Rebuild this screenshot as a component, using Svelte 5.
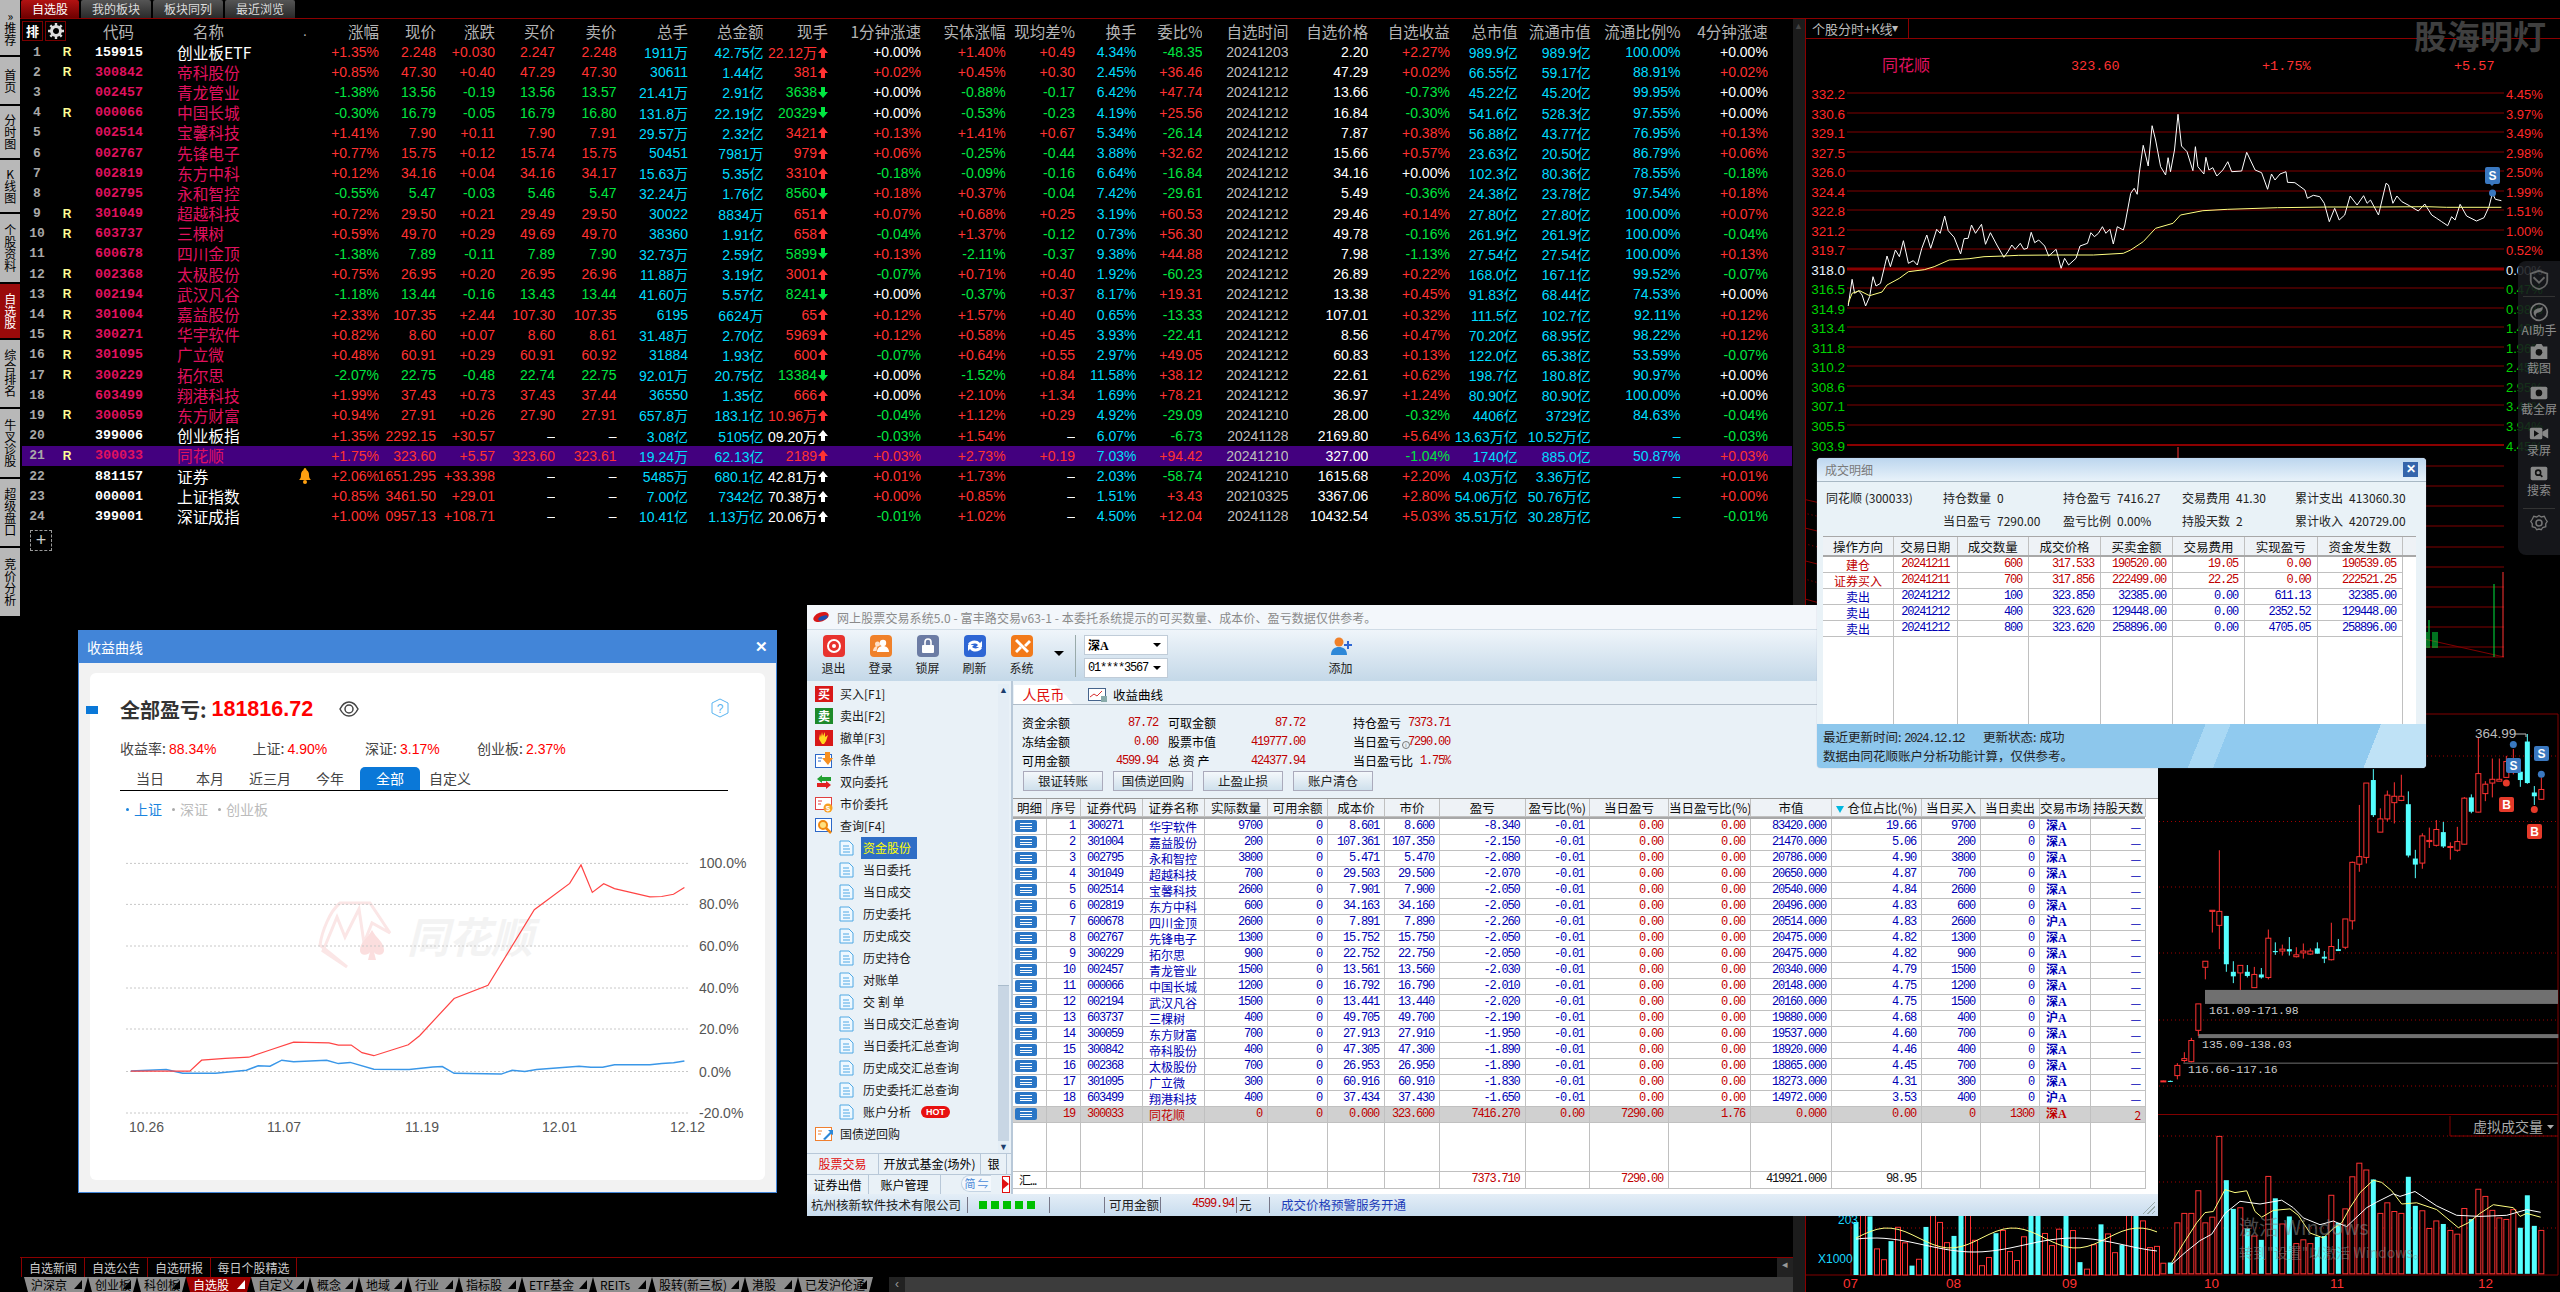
<script>
const rail = ['»推荐','首页','分时图','K线图','个股资料','自选股','综合排名','牛叉诊股','超级盘口','竞价分析'];
const topTabs = ['自选股','我的板块','板块同列','最近浏览'];
const heads = ['涨幅','现价','涨跌','买价','卖价','总手','总金额','现手','1分钟涨速','实体涨幅','现均差%','换手','委比%','自选时间','自选价格','自选收益','总市值','流通市值','流通比例%','4分钟涨速'];
const raw = `1 R 159915 创业板ETF _ +1.35% 2.248 +0.030 2.247 2.248 1911万 42.75亿 22.12万 u +0.00% +1.40% +0.49 4.34% -48.35 20241203 2.20 +2.27% 989.9亿 989.9亿 100.00% +0.00%
2 R 300842 帝科股份 _ +0.85% 47.30 +0.40 47.29 47.30 30611 1.44亿 381 u +0.02% +0.45% +0.30 2.45% +36.46 20241212 47.29 +0.02% 66.55亿 59.17亿 88.91% +0.02%
3 _ 002457 青龙管业 _ -1.38% 13.56 -0.19 13.56 13.57 21.41万 2.91亿 3638 d +0.00% -0.88% -0.17 6.42% +47.74 20241212 13.66 -0.73% 45.22亿 45.20亿 99.95% +0.00%
4 R 000066 中国长城 _ -0.30% 16.79 -0.05 16.79 16.80 131.8万 22.19亿 20329 d +0.00% -0.53% -0.23 4.19% +25.56 20241212 16.84 -0.30% 541.6亿 528.3亿 97.55% +0.00%
5 _ 002514 宝馨科技 _ +1.41% 7.90 +0.11 7.90 7.91 29.57万 2.32亿 3421 u +0.13% +1.41% +0.67 5.34% -26.14 20241212 7.87 +0.38% 56.88亿 43.77亿 76.95% +0.13%
6 _ 002767 先锋电子 _ +0.77% 15.75 +0.12 15.74 15.75 50451 7981万 979 u +0.06% -0.25% -0.44 3.88% +32.62 20241212 15.66 +0.57% 23.63亿 20.50亿 86.79% +0.06%
7 _ 002819 东方中科 _ +0.12% 34.16 +0.04 34.16 34.17 15.63万 5.35亿 3310 u -0.18% -0.09% -0.16 6.64% -16.84 20241212 34.16 +0.00% 102.3亿 80.36亿 78.55% -0.18%
8 _ 002795 永和智控 _ -0.55% 5.47 -0.03 5.46 5.47 32.24万 1.76亿 8560 d +0.18% +0.37% -0.04 7.42% -29.61 20241212 5.49 -0.36% 24.38亿 23.78亿 97.54% +0.18%
9 R 301049 超越科技 _ +0.72% 29.50 +0.21 29.49 29.50 30022 8834万 651 u +0.07% +0.68% +0.25 3.19% +60.53 20241212 29.46 +0.14% 27.80亿 27.80亿 100.00% +0.07%
10 R 603737 三棵树 _ +0.59% 49.70 +0.29 49.69 49.70 38360 1.91亿 658 u -0.04% +1.37% -0.12 0.73% +56.30 20241212 49.78 -0.16% 261.9亿 261.9亿 100.00% -0.04%
11 _ 600678 四川金顶 _ -1.38% 7.89 -0.11 7.89 7.90 32.73万 2.59亿 5899 d +0.13% -2.11% -0.37 9.38% +44.88 20241212 7.98 -1.13% 27.54亿 27.54亿 100.00% +0.13%
12 R 002368 太极股份 _ +0.75% 26.95 +0.20 26.95 26.96 11.88万 3.19亿 3001 u -0.07% +0.71% +0.40 1.92% -60.23 20241212 26.89 +0.22% 168.0亿 167.1亿 99.52% -0.07%
13 R 002194 武汉凡谷 _ -1.18% 13.44 -0.16 13.43 13.44 41.60万 5.57亿 8241 d +0.00% -0.37% +0.37 8.17% +19.31 20241212 13.38 +0.45% 91.83亿 68.44亿 74.53% +0.00%
14 R 301004 嘉益股份 _ +2.33% 107.35 +2.44 107.30 107.35 6195 6624万 65 u +0.12% +1.57% +0.40 0.65% -13.33 20241212 107.01 +0.32% 111.5亿 102.7亿 92.11% +0.12%
15 R 300271 华宇软件 _ +0.82% 8.60 +0.07 8.60 8.61 31.48万 2.70亿 5969 u +0.12% +0.58% +0.45 3.93% -22.41 20241212 8.56 +0.47% 70.20亿 68.95亿 98.22% +0.12%
16 R 301095 广立微 _ +0.48% 60.91 +0.29 60.91 60.92 31884 1.93亿 600 u -0.07% +0.64% +0.55 2.97% +49.05 20241212 60.83 +0.13% 122.0亿 65.38亿 53.59% -0.07%
17 R 300229 拓尔思 _ -2.07% 22.75 -0.48 22.74 22.75 92.01万 20.75亿 13384 d +0.00% -1.52% +0.84 11.58% +38.12 20241212 22.61 +0.62% 198.7亿 180.8亿 90.97% +0.00%
18 _ 603499 翔港科技 _ +1.99% 37.43 +0.73 37.43 37.44 36550 1.35亿 666 u +0.00% +2.10% +1.34 1.69% +78.21 20241212 36.97 +1.24% 80.90亿 80.90亿 100.00% +0.00%
19 R 300059 东方财富 _ +0.94% 27.91 +0.26 27.90 27.91 657.8万 183.1亿 10.96万 u -0.04% +1.12% +0.29 4.92% -29.09 20241210 28.00 -0.32% 4406亿 3729亿 84.63% -0.04%
20 _ 399006 创业板指 _ +1.35% 2292.15 +30.57 – – 3.08亿 5105亿 09.20万 w -0.03% +1.54% – 6.07% -6.73 20241128 2169.80 +5.64% 13.63万亿 10.52万亿 – -0.03%
21 R 300033 同花顺 _ +1.75% 323.60 +5.57 323.60 323.61 19.24万 62.13亿 2189 u +0.03% +2.73% +0.19 7.03% +94.42 20241210 327.00 -1.04% 1740亿 885.0亿 50.87% +0.03%
22 _ 881157 证券 b +2.06% 1651.295 +33.398 – – 5485万 680.1亿 42.81万 w +0.01% +1.73% – 2.03% -58.74 20241210 1615.68 +2.20% 4.03万亿 3.36万亿 – +0.01%
23 _ 000001 上证指数 _ +0.85% 3461.50 +29.01 – – 7.00亿 7342亿 70.38万 w +0.00% +0.85% – 1.51% +3.43 20210325 3367.06 +2.80% 54.06万亿 50.76万亿 – +0.00%
24 _ 399001 深证成指 _ +1.00% 0957.13 +108.71 – – 10.41亿 1.13万亿 20.06万 w -0.01% +1.02% – 4.50% +12.04 20241128 10432.54 +5.03% 35.51万亿 30.28万亿 – -0.01%`;
const whiteCode = new Set(['1','20','22','23','24']);
function signCls(v, id) {
  if (v === '–') return 'white';
  if (v.startsWith('+0.00') && id !== '23') return 'white';
  if (v[0] === '+') return 'red';
  if (v[0] === '-') return 'green';
  return 'white';
}
const rows = raw.split('\n').map((l) => {
  const p = l.trim().split(/\s+/);
  const [id, r, code, name, flag] = p;
  const v = p.slice(5);
  const base = v[0][0] === '+' ? 'red' : 'green';
  const dir = v[8];
  const cells = [
    [v[0], signCls(v[0], id)], [v[1], base], [v[2], signCls(v[2], id)], [v[3], v[3] === '–' ? 'white' : base], [v[4], v[4] === '–' ? 'white' : base],
    [v[5], 'cyan'], [v[6], 'cyan'], [v[7], dir === 'u' ? 'red' : dir === 'd' ? 'green' : 'white'],
    ...v.slice(9).map((t, idx) => {
      if (idx === 3 || idx === 8 || idx === 9 || idx === 10) return [t, 'cyan'];
      if (idx === 5) return [t, 'gray'];
      if (idx === 6) return [t, 'white'];
      return [t, signCls(t, id)];
    })
  ];
  return { id, r: r === 'R', code, name, bell: flag === 'b', cells, dir, white: whiteCode.has(id), hl: id === '21' };
});

const mp = (s, ox, oy, sx, sy) => s.trim().split(/\s+/).map((p) => { const [a, b] = p.split(','); return (ox + a / sx).toFixed(1) + ',' + (oy + b / sy).toFixed(1); }).join(' ');
// intraday chart
const tLines = [93,113,132,152,171,191,210,230,249,269,288,308,327,347,366,386,405,425,445,466,486,506,526,547,567,587,607,627,647,657];
const tLeft = ['332.2','330.6','329.1','327.5','326.0','324.4','322.8','321.2','319.7','318.0','316.5','314.9','313.4','311.8','310.2','308.6','307.1','305.5','303.9'];
const tRight = ['4.45%','3.97%','3.49%','2.98%','2.50%','1.99%','1.51%','1.00%','0.52%','0.00%','0.47%','0.98%','1.46%','1.96%','2.45%','2.95%','3.44%','3.94%','4.45%'];
const axisCls = (i) => i < 9 ? 'ax-red' : i === 9 ? 'ax-white' : 'ax-green';
const white = mp('137,918 145,838 150,880 158,872 165,885 172,918 180,890 187,830 193,858 202,850 210,800 215,768 222,800 232,750 240,770 248,722 258,790 268,782 276,795 285,745 295,705 303,745 315,688 322,700 331,648 338,692 350,712 363,762 370,716 378,715 385,675 393,700 405,673 413,733 423,698 436,735 450,772 458,755 466,735 473,748 483,730 490,748 497,745 505,697 512,728 520,720 532,738 540,768 555,748 565,805 572,775 580,795 595,775 603,738 618,730 625,698 632,710 640,700 648,680 655,700 663,688 670,732 678,680 690,690 693,675 705,580 712,565 718,583 722,522 730,436 740,498 748,377 755,420 765,500 775,525 780,473 785,515 793,450 800,343 807,438 818,455 830,512 835,440 840,500 852,522 856,472 862,510 870,503 878,528 890,510 900,485 908,515 928,513 938,457 955,510 968,518 980,568 988,522 995,540 1005,522 1017,515 1020,547 1035,548 1055,570 1060,595 1072,586 1085,590 1094,610 1104,665 1115,625 1124,660 1135,645 1146,588 1160,615 1173,587 1180,610 1187,600 1203,645 1218,550 1223,555 1232,610 1240,588 1250,605 1265,617 1283,633 1296,612 1310,645 1320,655 1330,665 1342,677 1350,650 1357,660 1367,613 1380,648 1400,663 1415,653 1425,620 1432,580 1438,598 1450,602', 1780, 0, 2.01, 3);
const yellow = mp('137,910 145,880 160,872 180,887 205,876 215,855 240,835 258,815 290,809 310,800 340,780 380,776 410,770 450,768 480,766 550,765 630,765 690,760 705,750 730,725 755,685 790,670 805,645 850,632 900,628 1000,623 1100,621 1200,621 1300,620 1340,622 1450,622', 1780, 0, 2.01, 3);
// k-line
const kx = (x) => 2160 + x / 3;
const ky = (y) => 700 + y / 2.649;
const candles = [
 [10,1008,1012,1009,1011,'r'],[31,1008,1012,1009,1011,'c'],[52,962,1005,968,995,'r'],[73,933,960,950,955,'r'],[94,895,960,902,958,'r'],[115,805,890,805,875,'r'],[136,692,740,692,708,'r'],[157,557,616,557,560,'r'],[178,398,660,560,597,'r'],[199,572,720,572,700,'c'],[220,692,750,720,732,'c'],[241,703,768,703,723,'r'],[262,702,735,720,731,'c'],[283,707,762,727,762,'r'],[304,710,738,727,735,'c'],[325,608,740,631,735,'r'],[346,642,675,665,668,'c'],[367,648,677,660,665,'r'],[388,628,677,660,666,'c'],[409,655,682,675,680,'r'],[430,645,685,665,670,'r'],[451,658,675,665,673,'r'],[472,642,672,658,672,'c'],[493,665,697,680,685,'c'],[514,590,690,653,688,'r'],[535,633,665,660,665,'c'],[556,580,660,580,655,'r'],[577,428,608,430,585,'r'],[598,278,455,415,435,'r'],[619,220,433,220,417,'r'],[640,183,310,212,305,'c'],[661,287,350,315,350,'r'],[682,240,322,252,315,'r'],[703,218,327,255,272,'r'],[724,198,268,255,266,'r'],[745,242,417,276,412,'c'],[766,397,472,420,436,'c'],[787,353,447,360,432,'r'],[808,338,392,372,375,'r'],[829,318,388,343,385,'r'],[850,323,392,350,388,'c'],[871,377,423,388,390,'r'],[892,336,402,375,398,'r'],[913,257,383,260,382,'r'],[934,250,300,258,296,'c'],[955,100,298,195,297,'r'],[976,215,268,223,248,'r'],[997,155,258,210,220,'r'],[1018,155,215,210,215,'r'],[1039,148,205,163,205,'r'],[1060,130,197,165,190,'r'],[1081,180,230,190,212,'c'],[1102,90,222,110,220,'c'],[1123,228,278,245,255,'c'],[1144,205,265,237,263,'r']
];
const vols = [[10,1492,'r'],[31,1490,'c'],[52,1385,'r'],[73,1360,'r'],[94,1360,'r'],[115,1300,'r'],[136,1385,'r'],[157,1370,'r'],[178,1156,'r'],[199,1272,'c'],[220,1348,'c'],[241,1345,'r'],[262,1400,'c'],[283,1420,'r'],[304,1430,'c'],[325,1262,'r'],[346,1320,'c'],[367,1388,'r'],[388,1368,'c'],[409,1440,'r'],[430,1430,'r'],[451,1440,'r'],[472,1422,'c'],[493,1420,'c'],[514,1312,'r'],[535,1385,'c'],[556,1348,'r'],[577,1263,'r'],[598,1227,'r'],[619,1245,'r'],[640,1270,'c'],[661,1360,'r'],[682,1332,'r'],[703,1355,'r'],[724,1360,'r'],[745,1263,'c'],[766,1340,'c'],[787,1353,'r'],[808,1400,'r'],[829,1380,'r'],[850,1388,'c'],[871,1405,'r'],[892,1415,'r'],[913,1347,'r'],[934,1375,'c'],[955,1296,'r'],[976,1315,'r'],[997,1352,'r'],[1018,1372,'r'],[1039,1376,'r'],[1060,1350,'r'],[1081,1398,'c'],[1102,1312,'c'],[1123,1393,'c'],[1144,1405,'r']];
const volLeft = Array.from({ length: 44 }, (_, i) => {
  const x = 1856 + i * 7;
  const top = 1236 - 22 * Math.sin(i * 1.3) - 14 * Math.cos(i * 0.47);
  return { x, top, c: (i * 7) % 5 === 0 || i % 6 === 2 };
});
const maY = volLeft.map((b, i) => b.x + ',' + (1238 - 10 * Math.sin(i * 0.35)).toFixed(1)).join(' ');
const maW = volLeft.map((b, i) => b.x + ',' + (1245 - 7 * Math.sin(i * 0.22 + 1)).toFixed(1)).join(' ');
const volY = mp('35,1490 70,1440 110,1385 135,1358 160,1355 195,1297 225,1305 260,1300 285,1355 305,1370 340,1352 390,1348 415,1365 450,1412 490,1425 520,1400 545,1385 570,1345 600,1305 640,1272 665,1278 695,1300 725,1335 770,1332 830,1350 895,1398 925,1385 960,1360 1000,1337 1060,1345 1080,1368 1100,1360 1142,1370', 2160, 700, 3, 2.649);
const volW = mp('35,1495 80,1460 120,1432 155,1415 195,1360 240,1328 300,1335 365,1325 400,1345 430,1372 480,1390 520,1380 560,1395 620,1345 650,1330 700,1308 720,1315 765,1302 830,1340 890,1365 960,1368 1040,1365 1100,1350 1142,1357', 2160, 700, 3, 2.649);
const kDots = [756, 821.5, 887, 953, 1020, 1086, 1136, 1182, 1228];
const months = [['07',1843],['08',1946],['09',2062],['10',2204],['11',2330],['12',2478]];
// profit chart
const gridP = [[863.4,'100.0%'],[904.4,'80.0%'],[946,'60.0%'],[988,'40.0%'],[1029,'20.0%'],[1071.5,'0.0%'],[1113,'-20.0%']];
const dates = [['10.26',129],['11.07',267],['11.19',405],['12.01',542],['12.12',670]];
const pRed = mp('150,1199 275,1199 300,1170 350,1165 400,1162 445,1143 495,1122 570,1124 590,1130 617,1130 640,1150 665,1158 738,1129 762,1105 835,1006 907,971 1005,770 1080,700 1104,651 1128,724 1152,701 1175,714 1250,736 1275,735 1300,729 1323,711', 60, 620, 2.119, 2.658);
const pBlue = mp('150,1199 225,1195 260,1205 330,1205 395,1197 420,1185 445,1186 470,1170 495,1174 565,1170 590,1179 615,1176 665,1194 740,1195 790,1188 810,1187 835,1205 935,1207 958,1197 985,1200 1010,1195 1100,1186 1125,1189 1150,1189 1175,1182 1250,1182 1275,1179 1300,1177 1323,1172', 60, 620, 2.119, 2.658);
const pTabs = ['当日','本月','近三月','今年','全部','自定义'];
// trade window
const tools = [['exit','退出'],['login','登录'],['lock','锁屏'],['refresh','刷新'],['sys','系统']];
const tree = [
 ['buy','买入[F1]',0],['sell','卖出[F2]',0],['undo','撤单[F3]',0],['cond','条件单',0],['two','双向委托',0],['mkt','市价委托',0],['query','查询[F4]',0],
 ['doc','资金股份',1],['doc','当日委托',1],['doc','当日成交',1],['doc','历史委托',1],['doc','历史成交',1],['doc','历史持仓',1],['doc','对账单',1],['doc','交 割 单',1],['doc','当日成交汇总查询',1],['doc','当日委托汇总查询',1],['doc','历史成交汇总查询',1],['doc','历史委托汇总查询',1],['doc','账户分析',1],['bond','国债逆回购',0]
];
const tHead = ['明细','序号','证券代码','证券名称','实际数量','可用余额','成本价','市价','盈亏','盈亏比(%)','当日盈亏','当日盈亏比(%)','市值','仓位占比(%)','当日买入','当日卖出','交易市场','持股天数'];
const pos = `1 300271 华宇软件 9700 8.601 8.600 -8.340 83420.000 19.66 深A
2 301004 嘉益股份 200 107.361 107.350 -2.150 21470.000 5.06 深A
3 002795 永和智控 3800 5.471 5.470 -2.080 20786.000 4.90 深A
4 301049 超越科技 700 29.503 29.500 -2.070 20650.000 4.87 深A
5 002514 宝馨科技 2600 7.901 7.900 -2.050 20540.000 4.84 深A
6 002819 东方中科 600 34.163 34.160 -2.050 20496.000 4.83 深A
7 600678 四川金顶 2600 7.891 7.890 -2.260 20514.000 4.83 沪A
8 002767 先锋电子 1300 15.752 15.750 -2.050 20475.000 4.82 深A
9 300229 拓尔思 900 22.752 22.750 -2.050 20475.000 4.82 深A
10 002457 青龙管业 1500 13.561 13.560 -2.030 20340.000 4.79 深A
11 000066 中国长城 1200 16.792 16.790 -2.010 20148.000 4.75 深A
12 002194 武汉凡谷 1500 13.441 13.440 -2.020 20160.000 4.75 深A
13 603737 三棵树 400 49.705 49.700 -2.190 19880.000 4.68 沪A
14 300059 东方财富 700 27.913 27.910 -1.950 19537.000 4.60 深A
15 300842 帝科股份 400 47.305 47.300 -1.890 18920.000 4.46 深A
16 002368 太极股份 700 26.953 26.950 -1.890 18865.000 4.45 深A
17 301095 广立微 300 60.916 60.910 -1.830 18273.000 4.31 深A
18 603499 翔港科技 400 37.434 37.430 -1.650 14972.000 3.53 沪A`.split('\n').map((l) => {
  const [n, c, nm, q, cost, pr, pl, mv, pct, mk] = l.trim().split(/\s+/);
  return { n, c, nm, cells: [q, '0', cost, pr, pl, '-0.01'], day: ['0.00', '0.00'], mv, pct, buy: q, sell: '0', mk, days: '—', red: false };
});
pos.push({ n: '19', c: '300033', nm: '同花顺', cells: ['0', '0', '0.000', '323.600', '7416.270', '0.00'], day: ['7290.00', '1.76'], mv: '0.000', pct: '0.00', buy: '0', sell: '1300', mk: '深A', days: '2', red: true });
const emptyCols = Array.from({ length: 18 });
const dHead = ['操作方向','交易日期','成交数量','成交价格','买卖金额','交易费用','实现盈亏','资金发生数'];
const dRows = [
 ['建仓','20241211','600','317.533','190520.00','19.05','0.00','190539.05',1],
 ['证券买入','20241211','700','317.856','222499.00','22.25','0.00','222521.25',1],
 ['卖出','20241212','100','323.850','32385.00','0.00','611.13','32385.00',0],
 ['卖出','20241212','400','323.620','129448.00','0.00','2352.52','129448.00',0],
 ['卖出','20241212','800','323.620','258896.00','0.00','4705.05','258896.00',0]
];
const news = ['自选新闻','自选公告','自选研报','每日个股精选'];
const sheets = ['沪深京','创业板','科创板','自选股','自定义','概念','地域','行业','指标股','ETF基金','REITs','股转(新三板)','港股','已发沪伦通'];
const sheetCls = ['w64','w49','w49','w65','w59','w49','w49','w51','w63','w71','w59','w93','w53','w75'];
</script>

{#snippet arrow(dir)}
  <svg class="arrow" viewBox="0 0 10 11" width="10" height="11">
    {#if dir === 'd'}
      <polygon points="3,0 7,0 7,5 10,5 5,11 0,5 3,5" fill="#00e640" />
    {:else}
      <polygon points="5,0 10,6 7,6 7,11 3,11 3,6 0,6" fill={dir === 'w' ? '#fff' : '#ff3232'} />
    {/if}
  </svg>
{/snippet}

{#snippet doc()}
  <svg class="ticon sub" viewBox="0 0 15 16" width="15" height="16">
    <path d="M1 1h9l4 4v10H1z" fill="#eef8ff" stroke="#4ea8e4" />
    <path d="M4 6h6M4 9h7M4 12h7" stroke="#4ea8e4" />
  </svg>
{/snippet}

{#snippet treeIcon(k)}
  {#if k === 'doc'}
    {@render doc()}
  {:else}
    <svg class="ticon" viewBox="0 0 18 18" width="18" height="18">
      {#if k === 'buy'}
        <rect x="0" y="1" width="18" height="16" fill="#d81818" /><text x="9" y="14" class="ict">买</text>
      {:else if k === 'sell'}
        <rect x="0" y="1" width="18" height="16" fill="#1d8a2a" /><text x="9" y="14" class="ict">卖</text>
      {:else if k === 'undo'}
        <rect x="0" y="1" width="18" height="16" fill="#d81818" /><path d="M4 10l1-5 1 3 1-5 1 4 2-4 0 5 3-2-2 6-2 3H7z" fill="#ffd820" />
      {:else if k === 'cond'}
        <rect x="0.5" y="3.5" width="16" height="13" fill="#fff" stroke="#2c68c8" /><path d="M10 1h5v6h3l-5 7-6-7h3z" fill="#f89020" /><path d="M3 7h4M3 10h3" stroke="#2c68c8" />
      {:else if k === 'two'}
        <path d="M2 6l5-4v2h9v4H7v2z" fill="#20a030" /><path d="M16 12l-5-4v2H2v4h9v2z" fill="#e02020" />
      {:else if k === 'mkt'}
        <rect x="0.5" y="2.5" width="16" height="12" fill="#fff" stroke="#e04040" /><path d="M3 6h4M3 9h3" stroke="#e04040" /><circle cx="13" cy="13" r="4.5" fill="#f8a020" /><text x="13" y="16" class="ict2">$</text>
      {:else if k === 'query'}
        <rect x="0.5" y="1.5" width="16" height="13" fill="#fff" stroke="#2c68c8" /><circle cx="8" cy="8" r="4" fill="#ffe080" stroke="#f08810" stroke-width="2" /><path d="M11 11l5 5" stroke="#f08810" stroke-width="2.5" />
      {:else}
        <rect x="0.5" y="2.5" width="16" height="13" fill="#fff" stroke="#f08030" /><path d="M3 6h4M3 9h3" stroke="#f08030" /><path d="M8 14l7-7-2-2h5v5l-2-1-6 6z" fill="#2c88d8" />
      {/if}
    </svg>
  {/if}
{/snippet}

{#snippet toolIcon(k)}
  <svg viewBox="0 0 22 22" width="22" height="22">
    {#if k === 'exit'}
      <rect width="22" height="22" rx="4" fill="#e8332e" /><circle cx="11" cy="11" r="6" fill="none" stroke="#fff" stroke-width="2" /><circle cx="11" cy="11" r="2" fill="#fff" />
    {:else if k === 'login'}
      <rect width="22" height="22" rx="4" fill="#f0812a" /><circle cx="13" cy="8" r="3.2" fill="#fff" /><path d="M7 17c0-4 3-6 6-6s6 2 6 6z" fill="#fff" /><circle cx="7.5" cy="9" r="2.5" fill="#ffe0c8" /><path d="M3 16c0-3 2-5 4.500-5l-1 5z" fill="#ffe0c8" />
    {:else if k === 'lock'}
      <rect width="22" height="22" rx="4" fill="#6c7ca4" /><rect x="5" y="10" width="12" height="8" rx="1" fill="#fff" /><path d="M8 10V7a3 3 0 016 0v3" fill="none" stroke="#fff" stroke-width="1.6" />
    {:else if k === 'refresh'}
      <rect width="22" height="22" rx="4" fill="#2e66d4" /><path d="M4 9c2-4 9-5 12-1l2-2v6h-6l2-2c-2-2-6-2-8 1z" fill="#fff" /><path d="M18 13c-2 4-9 5-12 1l-2 2v-6h6l-2 2c2 2 6 2 8-1z" fill="#fff" />
    {:else}
      <rect width="22" height="22" rx="4" fill="#f27a1a" /><path d="M4 6l2-2 12 12-2 2z" fill="#fff" /><path d="M18 5l-5 5 2 2 5-5M4 16l5-5 2 2-5 5z" fill="#fff" />
    {/if}
  </svg>
{/snippet}

<div class="app">
  <nav class="rail">
    {#each rail as r}
      <div class="rail-btn" class:on={r === '自选股'} class:h2={r.length === 2} class:h3={r.length === 3 && r[0] !== '»'} class:h4={r.length === 4} class:first={r[0] === '»'}>{r}</div>
    {/each}
  </nav>

  <div class="main">
    <div class="tabs">
      {#each topTabs as t, i}
        <div class="tab" class:on={i === 0} class:wide={i > 0}>{t}</div>
      {/each}
    </div>
    <div class="body">
      <div class="left">
        <section class="quotes">
          <div class="qrow head">
            <div class="cn hbtns">
              <span class="hbtn">排</span>
              <span class="hbtn"><svg viewBox="0 0 16 16" width="16" height="16"><circle cx="8" cy="8" r="4.500" fill="none" stroke="#ddd" stroke-width="3" /><path d="M8 0v3M8 13v3M0 8h3M13 8h3M2.300 2.300l2 2M11.700 11.700l2 2M2.300 13.700l2-2M11.700 4.300l2-2" stroke="#ddd" stroke-width="2.400" /></svg></span>
            </div>
            <div class="cr"></div>
            <div class="cc ch">代码</div>
            <div class="cm ch">名称</div>
            <div class="cb ch">.</div>
            {#each heads as h}<div class="cv ch">{h}</div>{/each}
          </div>
          {#each rows as q}
            <div class="qrow" class:hl={q.hl}>
              <div class="cn num">{q.id}</div>
              <div class="cr rr">{q.r ? 'R' : ''}</div>
              <div class="cc code" class:wt={q.white}>{q.code}</div>
              <div class="cm name" class:wt={q.white}>{q.name}</div>
              <div class="cb">
                {#if q.bell}
                  <svg viewBox="0 0 12 16" width="12" height="16"><path d="M6 0c1 0 1.500 1 1.500 2 2 1 2.500 3 2.500 5 0 3 1 4 2 5H0c1-1 2-2 2-5 0-2 .5-4 2.500-5C4.500 1 5 0 6 0z" fill="#ffa010" /><circle cx="6" cy="14" r="2" fill="#ffa010" /></svg>
                {/if}
              </div>
              {#each q.cells as c, i}
                <div class="cv {c[1]}" class:xh={i === 7}>{c[0]}{#if i === 7}{@render arrow(q.dir)}{/if}</div>
              {/each}
            </div>
          {/each}
          <div class="addbtn">+</div>
        </section>
        <div class="newsbar">
          {#each news as n, i}<div class="news" class:n4={i === 3}>{n}</div>{/each}
          <div class="newsend">◂</div>
        </div>
        <div class="sheets">
          {#each sheets as s, i}
            <div class="sheet {sheetCls[i]}" class:on={s === '自选股'}>{s}<i class="tri"></i></div>
          {/each}
          <div class="sheet-gap"></div>
          <div class="sheet-scroll">‹</div>
          <div class="sheet-rest"></div>
        </div>
      </div>
      <div class="scrollstrip"><span class="up">▲</span></div>
      <div class="panel">
        <div class="phead">
          <span class="pname">个股分时+K线</span><span class="parrow">▾</span>
          <span class="pwm">股海明灯</span>
        </div>
        <svg class="charts" viewBox="1806 39 754 1253" width="754" height="1253">
          <text x="1882" y="71" class="qt pink">同花顺</text>
          <text x="2071" y="70" class="qt red-f">323.60</text>
          <text x="2262" y="70" class="qt red-f">+1.75%</text>
          <text x="2454" y="70" class="qt red-f">+5.57</text>

          {#each [1931,2094,2258,2422] as x}<line {x} x2={x} y1="93" y2="657" class="gd" />{/each}
          {#each [2012,2176,2340,1847,2504] as x}<line {x} x2={x} y1="93" y2="657" class="g" />{/each}
          {#each tLines as y, i}
            <line x1="1847" x2="2504" y1={y} y2={y} class="g" class:thick={i === 9} class:thick2={i === 18} />
          {/each}
          {#each tLeft as t, i}
            <text x="1845" y={tLines[i] + 6} class="axl {axisCls(i)}">{t}</text>
            <text x="2506" y={tLines[i] + 6} class="axr {axisCls(i)}">{tRight[i]}</text>
          {/each}
          <polyline points={white} class="lw" />
          <polyline points={yellow} class="ly" />
          <line x1="2178" x2="2178" y1="447" y2="500" class="br" />
          <line x1="2494" x2="2494" y1="584" y2="657" class="bg" />
          <line x1="2503" x2="2503" y1="572" y2="657" class="br" />
          {#each [[2427,632],[2429,620],[2433,632],[2435,632],[2437,632]] as b}
            <line x1={b[0]} x2={b[0]} y1={b[1]} y2="648" class="bg" />
          {/each}
          <circle cx="2492.500" cy="193" r="3.500" fill="#3a78c0" />
          <path d="M2485 169a2 2 0 012-2h11a2 2 0 012 2v13a2 2 0 01-2 2h-4l-2 2-2-2h-3a2 2 0 01-2-2z" fill="#3a78c0" />
          <text x="2492.500" y="180" class="mk">S</text>

          <!-- K-line panel -->
          <line x1="1806" x2="2558" y1="714" y2="714" class="g" />
          <line x1="2558" x2="2558" y1="714" y2="1275" class="g" />
          <line x1="1851" x2="1851" y1="714" y2="1275" class="g" />
          {#each kDots as y}<line x1="1851" x2="2558" y1={y} y2={y} class="gd" />{/each}
          <line x1="1806" x2="2558" y1="1114.500" y2="1114.500" class="g" />
          <line x1="1806" x2="2558" y1="1275" y2="1275" class="g" />

          <rect x={kx(135)} y={ky(768)} width="353" height="14" fill="#707070" />
          <rect x={kx(115)} y={ky(885)} width="360" height="4" fill="#707070" />
          <line x1={kx(70)} x2="2558" y1={ky(962)} y2={ky(962)} stroke="#707070" />
          <text x={kx(147)} y={ky(832)} class="rng">161.09-171.98</text>
          <text x={kx(126)} y={ky(922)} class="rng">135.09-138.03</text>
          <text x={kx(84)} y={ky(988)} class="rng">116.66-117.16</text>

          {#each candles as c}
            <line x1={kx(c[0])} x2={kx(c[0])} y1={ky(c[1])} y2={ky(c[2])} class={c[5] === 'r' ? 'wr' : 'wc'} />
            <rect x={kx(c[0]) - 2.500} y={ky(c[3])} width="5" height={Math.max(1, (c[4] - c[3]) / 2.649)} class={c[5] === 'r' ? 'kr' : 'kc'} />
          {/each}

          <text x="2475" y="738" class="hi">364.99</text>
          <path d="M2515 734h11v3" fill="none" stroke="#bbb" />
          <circle cx={kx(1060)} cy={ky(118)} r="3.500" fill="#3a78c0" />
          <rect x="2506" y="758" width="15" height="15" rx="2" fill="#3a78c0" /><text x="2513.500" y="770" class="mk">S</text>
          <circle cx={kx(1144)} cy={ky(197)} r="3.500" fill="#3a78c0" />
          <rect x="2534" y="746" width="15" height="15" rx="2" fill="#3a78c0" /><text x="2541.500" y="758" class="mk">S</text>
          <circle cx={kx(1039)} cy={ky(220)} r="3.500" fill="#e53a2a" />
          <rect x="2499" y="797" width="15" height="15" rx="2" fill="#e53a2a" /><text x="2506.500" y="809" class="mk">B</text>
          <circle cx={kx(1123)} cy={ky(290)} r="3.500" fill="#e53a2a" />
          <rect x="2527" y="824" width="15" height="15" rx="2" fill="#e53a2a" /><text x="2534.500" y="836" class="mk">B</text>

          <!-- volume -->
          {#each volLeft as b}
            <rect x={b.x - 2.500} y={b.top} width="5" height={1275 - b.top} class={b.c ? 'kc' : 'kr'} />
          {/each}
          {#each vols as v}
            <rect x={kx(v[0]) - 2.500} y={ky(v[1])} width="5" height={(1520 - v[1]) / 2.649} class={v[2] === 'r' ? 'kr' : 'kc'} />
          {/each}
          <polyline points={maY} class="ly" />
          <polyline points={maW} class="lw" />
          <polyline points={volY} class="ly" />
          <polyline points={volW} class="lw" />

          <path d="M2450 1116v20h108" fill="none" stroke="#800000" />
          <text x="2473" y="1132" class="vn">虚拟成交量</text>
          <path d="M2547 1125h7l-3.500 4z" fill="#aaa" />

          <text x="1838" y="1224" class="cyan-t">203</text>
          <text x="1818" y="1263" class="cyan-t">X1000</text>
          {#each months as m}<text x={m[1]} y="1288" class="mon">{m[0]}</text>{/each}

          <text x="2239" y="1235" class="act a1">激活 Windows</text>
          <text x="2239" y="1258" class="act a2">转到"设置"以激活 Windows。</text>
        </svg>
        <aside class="sidebar">
          <div class="side-i top"><svg viewBox="0 0 24 24" width="22" height="22"><path d="M12 2l9 3v8c0 5-5 8-9 9-4-1-9-4-9-9V5z" fill="none" stroke="#666" stroke-width="2" /><path d="M6 9l6 6 6-6" fill="none" stroke="#666" stroke-width="2" /></svg></div>
          <div class="side-sep"></div>
          <div class="side-i"><svg viewBox="0 0 24 24" width="20" height="20"><circle cx="12" cy="12" r="10" fill="none" stroke="#777" stroke-width="2" /><path d="M16 5c2 6-3 7-6 8-2 1-3 4 0 6-5-2-6-8-2-10 3-2 7-1 8-4z" fill="#777" /></svg><span>AI助手</span></div>
          <div class="side-i"><svg viewBox="0 0 24 20" width="20" height="17"><path d="M2 4h5l2-3h6l2 3h5v15H2z" fill="#888" /><circle cx="12" cy="11" r="4" fill="#111" /></svg><span>截图</span></div>
          <div class="side-i"><svg viewBox="0 0 24 20" width="20" height="17"><rect x="2" y="3" width="20" height="15" rx="2" fill="#888" /><circle cx="12" cy="10.500" r="4" fill="#111" /></svg><span>截全屏</span></div>
          <div class="side-i"><svg viewBox="0 0 24 20" width="20" height="17"><rect x="1" y="3" width="15" height="14" rx="2" fill="#888" /><path d="M16 8l7-4v12l-7-4z" fill="#888" /><path d="M6 6l6 4-6 4z" fill="#111" /></svg><span>录屏</span></div>
          <div class="side-i"><svg viewBox="0 0 24 20" width="20" height="17"><rect x="2" y="2" width="20" height="16" rx="2" fill="#888" /><circle cx="11" cy="9" r="3" fill="none" stroke="#111" stroke-width="2" /><path d="M13 11l3 3" stroke="#111" stroke-width="2" /></svg><span>搜索</span></div>
          <div class="side-sep"></div>
          <div class="side-i"><svg viewBox="0 0 24 24" width="18" height="18"><circle cx="12" cy="12" r="4" fill="none" stroke="#777" stroke-width="2" /><path d="M12 2l3 2 4-1 2 4 2 3-2 3 0 4-4 1-2 3-3-1-3 1-2-3-4-1 0-4-2-3 2-3 2-4 4 1z" fill="none" stroke="#777" stroke-width="1.800" /></svg></div>
        </aside>
      </div>
    </div>
  </div>

  <!-- 收益曲线 -->
  <section class="win profit">
    <header class="ptitle"><span>收益曲线</span><b>✕</b></header>
    <div class="pbody">
      <div class="pcard">
        <i class="bluesq"></i>
        <div class="ptotal">
          <span class="pl">全部盈亏:</span><span class="pv">181816.72</span>
          <svg class="eye" viewBox="0 0 20 16" width="20" height="16"><path d="M1 8c2-4 5-7 9-7s7 3 9 7c-2 4-5 7-9 7s-7-3-9-7z" fill="none" stroke="#444" stroke-width="1.500" /><circle cx="10" cy="8" r="4" fill="none" stroke="#444" stroke-width="1.500" /></svg>
          <svg class="help" viewBox="0 0 18 20" width="18" height="20"><path d="M9 1l8 4v10l-8 4-8-4V5z" fill="none" stroke="#5ab4f0" /><text x="9" y="15" class="q">?</text></svg>
        </div>
        <div class="pstats">
          <span class="st s1">收益率: <em>88.34%</em></span>
          <span class="st s2">上证: <em>4.90%</em></span>
          <span class="st s3">深证: <em>3.17%</em></span>
          <span class="st">创业板: <em>2.37%</em></span>
        </div>
        <div class="ptabs">
          {#each pTabs as t, i}<div class="ptab" class:on={i === 4}>{t}</div>{/each}
        </div>
        <div class="plegend">
          <span class="lg on"><i></i>上证</span>
          <span class="lg"><i></i>深证</span>
          <span class="lg"><i></i>创业板</span>
        </div>
        <svg class="pchart" viewBox="90 835 676 345" width="676" height="345">
          <text x="407" y="953" class="pwm2">同花顺</text>
          <path d="M320 945c2-14 10-34 20-42l30 0 20 30-18-10-8 20-5-34-14 28-8-20-14 34 24 16z" fill="none" stroke="#fbe6e6" stroke-width="3" />
          <path d="M372 930c4 8 12 12 12 20 0 6-8 6-10 2l2 8h-8l2-8c-2 4-10 4-10-2 0-8 8-12 12-20z" fill="#fbdede" />
          {#each gridP as g}
            <line x1="126" x2="689" y1={g[0]} y2={g[0]} class="pg" />
            <text x="699" y={g[0] + 5} class="ptx">{g[1]}</text>
          {/each}
          {#each dates as d}<text x={d[1]} y="1132" class="ptx">{d[0]}</text>{/each}
          <polyline points={pBlue} class="pb" />
          <polyline points={pRed} class="pr" />
        </svg>
      </div>
    </div>
  </section>

  <!-- 交易窗口 -->
  <section class="win trade">
    <header class="ttitle">
      <svg viewBox="0 0 18 12" width="18" height="12"><ellipse cx="9" cy="6" rx="8" ry="4.500" fill="#d81818" transform="rotate(-20 9 6)" /><ellipse cx="11" cy="7" rx="5" ry="2" fill="#1c4fb0" transform="rotate(-20 11 7)" /></svg>
      <span>网上股票交易系统5.0 - 富丰路交易v63-1 - 本委托系统提示的可买数量、成本价、盈亏数据仅供参考。</span>
    </header>
    <div class="toolbar">
      <div class="tools">
        {#each tools as t}
          <div class="tool">{@render toolIcon(t[0])}<span>{t[1]}</span></div>
        {/each}
      </div>
      <i class="tdrop"></i>
      <i class="tsep"></i>
      <div class="selects">
        <div class="sel"><span class="selt">深A</span><i></i></div>
        <div class="sel"><span class="mono">01****3567</span><i></i></div>
      </div>
      <div class="tool add">
        <svg viewBox="0 0 22 22" width="22" height="22"><circle cx="9" cy="7" r="4.500" fill="#f0812a" /><path d="M1 20c0-6 4-8 8-8s8 2 8 8z" fill="#2e88d8" /><path d="M18 6v8M14 10h8" stroke="#2e66d4" stroke-width="2" /></svg>
        <span>添加</span>
      </div>
    </div>
    <div class="tmain">
      <div class="navcol">
        <div class="treewrap">
          <div class="tree">
            {#each tree as t}
              <div class="titem" class:sub={t[2] === 1}>
                {@render treeIcon(t[0])}
                <span class="tl" class:sel2={t[1] === '资金股份'}>{t[1]}</span>
                {#if t[1] === '账户分析'}<b class="hot">HOT</b>{/if}
              </div>
            {/each}
          </div>
          <div class="vscroll"><i class="sb-a">▲</i><i class="sb-t"></i><i class="sb-a dn">▼</i></div>
        </div>
        <div class="ntabs">
          <div class="ntab on n1">股票交易</div><div class="ntab n2">开放式基金(场外)</div><div class="ntab n3">银</div>
        </div>
        <div class="ntabs r2">
          <div class="ntab n4">证券出借</div><div class="ntab n5">账户管理</div>
          <div class="jian"><span>简</span><span>⇋</span></div>
          <i class="redplay"></i>
        </div>
      </div>
      <div class="rightcol">
        <div class="rtabs">
          <div class="rtab">人民币</div>
          <svg class="chart-ic" viewBox="0 0 20 14" width="20" height="14"><rect x="0.500" y="0.500" width="17" height="12" fill="#fff" stroke="#46648c" /><path d="M2 9l4-3 3 2 5-5" fill="none" stroke="#d83030" /><rect x="13" y="8" width="6" height="6" fill="#8aa" /></svg>
          <span>收益曲线</span>
        </div>
        <div class="funds">
          <span>资金余额</span><b>87.72</b><span class="l2">可取金额</span><b>87.72</b><span class="l3">持仓盈亏</span><b>7373.71</b>
          <span>冻结金额</span><b>0.00</b><span class="l2">股票市值</span><b>419777.00</b><span class="l3">当日盈亏<i class="inf">i</i></span><b>7290.00</b>
          <span>可用金额</span><b>4599.94</b><span class="l2">总 资 产</span><b>424377.94</b><span class="l3">当日盈亏比</span><b>1.75%</b>
        </div>
        <div class="btns">
          <button>银证转账</button><button>国债逆回购</button><button>止盈止损</button><button>账户清仓</button>
        </div>
        <div class="grid">
          <div class="grow ghead">
            {#each tHead as h}<div class="gc">{#if h === '仓位占比(%)'}<i class="sortd"></i>{/if}{h}</div>{/each}
          </div>
          {#each pos as p}
            <div class="grow" class:sold={p.red}>
              <div class="gc"><span class="detail"><i></i></span></div>
              <div class="gc rt">{p.n}</div>
              <div class="gc lt">{p.c}</div>
              <div class="gc cnm">{p.nm}</div>
              {#each p.cells as c}<div class="gc rt">{c}</div>{/each}
              <div class="gc rt redc">{p.day[0]}</div>
              <div class="gc rt redc">{p.day[1]}</div>
              <div class="gc rt">{p.mv}</div>
              <div class="gc rt">{p.pct}</div>
              <div class="gc rt">{p.buy}</div>
              <div class="gc rt">{p.sell}</div>
              <div class="gc mkt">{p.mk}</div>
              <div class="gc rt dys">{p.days}</div>
            </div>
          {/each}
          <div class="grow filler">{#each emptyCols as _}<div class="gc"></div>{/each}</div>
          <div class="grow total">
            <div class="gc lt cnx">汇...</div>
            <div class="gc"></div><div class="gc"></div><div class="gc"></div><div class="gc"></div><div class="gc"></div><div class="gc"></div><div class="gc"></div>
            <div class="gc rt redc">7373.710</div><div class="gc"></div>
            <div class="gc rt redc">7290.00</div><div class="gc"></div>
            <div class="gc rt bk">419921.000</div><div class="gc rt bk">98.95</div>
            <div class="gc"></div><div class="gc"></div><div class="gc"></div><div class="gc"></div>
          </div>
        </div>
      </div>
    </div>
    <footer class="status">
      <span class="s-co">杭州核新软件技术有限公司</span>
      <span class="s-led">{#each [0,1,2,3,4] as _}<i></i>{/each}</span>
      <span class="s-blank"></span>
      <span class="s-lab">可用金额</span>
      <span class="s-val">4599.94</span>
      <span class="s-un">元</span>
      <span class="s-link">成交价格预警服务开通</span>
      <i class="grip"></i>
    </footer>
  </section>

  <!-- 成交明细 -->
  <section class="win detailw">
    <header class="dtitle"><span>成交明细</span><b class="dclose">✕</b></header>
    <div class="dinfo">
      <span class="d0">同花顺 (300033)</span>
      <span class="d1"><em>持仓数量</em>0</span>
      <span class="d1"><em>持仓盈亏</em>7416.27</span>
      <span class="d1"><em>交易费用</em>41.30</span>
      <span class="d1"><em>累计支出</em>413060.30</span>
      <span class="d0"></span>
      <span class="d1"><em>当日盈亏</em>7290.00</span>
      <span class="d1"><em>盈亏比例</em>0.00%</span>
      <span class="d1"><em>持股天数</em>2</span>
      <span class="d1"><em>累计收入</em>420729.00</span>
    </div>
    <div class="dtable">
      <div class="drow dhead">{#each dHead as h}<div class="dc">{h}</div>{/each}</div>
      {#each dRows as r}
        <div class="drow" class:dred={r[8] === 1}>
          <div class="dc dop">{r[0]}</div>
          <div class="dc dmid">{r[1]}</div>
          {#each r.slice(2, 8) as v}<div class="dc drt">{v}</div>{/each}
        </div>
      {/each}
      <div class="drow dfill">{#each dHead as _}<div class="dc"></div>{/each}</div>
    </div>
    <div class="dfoot">
      <p>最近更新时间: <span class="mono">2024.12.12</span> <span class="gap">更新状态: 成功</span></p>
      <p class="dnote">数据由同花顺账户分析功能计算，仅供参考。</p>
    </div>
  </section>
</div>

<style>
:global(body) { margin: 0; background: #000; }
:global(*) { box-sizing: border-box; }
.app {
  width: 2560px; height: 1292px; background: #000; position: relative; overflow: hidden;
  display: grid; grid-template-columns: 20px 1fr;
  font-family: "Liberation Sans", "Noto Sans CJK SC", sans-serif; color: #ddd;
}
/* rail */
.rail { display: flex; flex-direction: column; }
.rail-btn {
  background: #b8b8b8; color: #000; font: 12px/13.5px "Noto Sans CJK SC", sans-serif;
  writing-mode: vertical-rl; text-orientation: upright; display: flex; align-items: center; justify-content: center;
  border-bottom: 2px solid #000; width: 20px; height: 54px; letter-spacing: 0;
}
.rail-btn.first { height: 57px; }
.rail-btn.h2 { height: 49px; }
.rail-btn.h3 { height: 54px; }
.rail-btn.h4 { height: 69.500px; }
.rail-btn.on { background: #9a0a0a; color: #fff; height: 56px; }

.main { display: flex; flex-direction: column; min-width: 0; }
.tabs { height: 19px; flex: none; display: flex; gap: 2px; padding-left: 1px; border-bottom: 1px solid #8b0000; }
.tab { width: 58px; height: 18px; font: 12px/17px "Noto Sans CJK SC", sans-serif; text-align: center; color: #ddd; background: linear-gradient(#555, #2a2a2a); border-radius: 2px 2px 0 0; }
.tab.wide { width: 70px; }
.tab.on { background: linear-gradient(#b31212, #6e0000); color: #fff; }

.body { flex: 1; display: flex; min-height: 0; }
.left { width: 1773px; flex: none; display: flex; flex-direction: column; }
.quotes { flex: 1; padding-left: 2px; }
.qrow {
  display: grid; height: 20.200px; align-items: center; width: 1770px;
  grid-template-columns: 30px 30px 95px 113px 30px 59px 57px 59px 60px 61.500px 71.500px 75.500px 64.500px 93px 84.600px 69.400px 61.500px 66px 86px 79.800px 81.600px 68px 73px 89.700px 87.300px 24px;
  font-size: 14px; white-space: nowrap;
}
.qrow.head { height: 23px; }
.qrow.hl { background: #43007f; }
.cn { text-align: center; }
.num { font: bold 13px "Liberation Mono", monospace; color: #a8a8a8; }
.cr { text-align: center; }
.rr { font: bold 12px "Liberation Sans", sans-serif; color: #ffff96; }
.cc { padding-left: 13px; }
.code { font: bold 13.300px "Liberation Mono", monospace; color: #e0115f; }
.cm { overflow: hidden; }
.name { font: 15.700px "Noto Sans CJK SC", sans-serif; color: #e0115f; }
.wt { color: #fff; }
.cb { display: flex; justify-content: center; }
.cv { display: flex; justify-content: flex-end; align-items: center; overflow: hidden; min-width: 0; }
.ch { font: 15.500px "Noto Sans CJK SC", sans-serif; color: #b4b4b4; }
.cc.ch { padding-left: 21px; }
.cm.ch { padding-left: 16px; }
.cb.ch { font-size: 12px; }
.hbtns { display: flex; gap: 2px; margin-right: -14px; }
.hbtn { width: 21px; height: 20px; border: 1px solid #7a0000; display: flex; align-items: center; justify-content: center; color: #fff; font: bold 13px "Noto Sans CJK SC", sans-serif; }
.red { color: #ff3232; }
.green { color: #00e640; }
.white { color: #fff; }
.cyan { color: #00dcff; }
.gray { color: #bdbdbd; }
.arrow { flex: none; margin-left: 1px; }
.addbtn { width: 22px; height: 21px; border: 1px dashed #999; color: #ccc; margin: 3px 0 0 8px; font: 18px/18px "Liberation Sans", sans-serif; text-align: center; }

.newsbar { height: 20px; flex: none; display: flex; border-top: 1px solid #8b0000; padding-left: 1px; }
.news { width: 63px; border-left: 1px solid #8b0000; font: 12px/19px "Noto Sans CJK SC", sans-serif; color: #ccc; text-align: center; }
.news.n4 { width: 87px; border-right: 1px solid #8b0000; }
.newsend { margin-left: auto; width: 16px; background: #222; color: #999; font-size: 11px; text-align: center; }
.sheets { height: 15px; flex: none; display: flex; padding-left: 4px; overflow: hidden; }
.sheet { position: relative; background: #8e8e8e; color: #000; font: 12px/15px "Noto Sans CJK SC", sans-serif; padding-left: 7px; clip-path: polygon(0 0, 100% 0, calc(100% - 4px) 100%, 4px 100%); white-space: nowrap; overflow: hidden; }
.sheet.on { background: #a00000; color: #fff; }
.tri { position: absolute; right: 6px; top: 3px; width: 0; height: 0; border-left: 8px solid transparent; border-bottom: 9px solid #000; }
.sheet.on .tri { border-bottom-color: #fff; }
.w64 { width: 64px; } .w49 { width: 49px; } .w65 { width: 65px; } .w59 { width: 59px; } .w51 { width: 51px; } .w63 { width: 63px; } .w71 { width: 71px; } .w93 { width: 93px; } .w53 { width: 53px; } .w75 { width: 75px; }
.sheet-gap { width: 16px; flex: none; }
.sheet-scroll { width: 16px; flex: none; background: #222; color: #999; font-size: 12px; line-height: 14px; text-align: center; }
.sheet-rest { flex: 1; background: #3c3c3c; }

.scrollstrip { width: 12px; flex: none; background: #1c1c1c; position: relative; }
.scrollstrip .up { position: absolute; top: 2px; left: 1px; font-size: 9px; color: #444; }

.panel { flex: 1; position: relative; border-left: 1px solid #8b0000; display: flex; flex-direction: column; min-width: 0; }
.phead { height: 20px; flex: none; border-bottom: 1px solid #8b0000; display: flex; align-items: center; padding-left: 6px; position: relative; }
.pname { font: 13px "Noto Sans CJK SC", sans-serif; color: #bbb; width: 80px; white-space: nowrap; }
.parrow { color: #bbb; font-size: 12px; width: 17px; border-right: 1px solid #8b0000; height: 19px; line-height: 18px; }
.pwm { position: absolute; right: 14px; top: -2px; font: bold 33px/36px "Noto Sans CJK SC", sans-serif; color: #3f3f3f; letter-spacing: 0; }
.charts { flex: none; display: block; }
.qt { font: 13.500px "Liberation Mono", "Noto Sans CJK SC", monospace; }
.pink { fill: #e0115f; font-family: "Noto Sans CJK SC", sans-serif; font-size: 16px; }
.red-f { fill: #ff3232; }
.g { stroke: #800000; stroke-width: 1; }
.g.thick { stroke-width: 3; stroke: #8b0000; }
.g.thick2 { stroke-width: 2; stroke: #8b0000; }
.gd { stroke: #a00000; stroke-width: 1; stroke-dasharray: 1 3; }
.axl { font: 13.500px "Liberation Sans", sans-serif; text-anchor: end; }
.axr { font: 13px "Liberation Sans", sans-serif; }
.ax-red { fill: #ff2828; }
.ax-white { fill: #e8f4ff; }
.ax-green { fill: #00d200; }
.lw { fill: none; stroke: #fff; stroke-width: 1; }
.ly { fill: none; stroke: #ffff80; stroke-width: 1; }
.br { stroke: #ff3232; }
.bg { stroke: #00e640; }
.mk { font: bold 12px "Liberation Sans", sans-serif; fill: #fff; text-anchor: middle; }
.rng { font: 11.500px "Liberation Mono", monospace; fill: #ccc; }
.hi { font: 13.500px "Liberation Sans", sans-serif; fill: #bbb; }
.wr { stroke: #ff3232; }
.wc { stroke: #54ffff; }
.kr { fill: #000; stroke: #ff3232; }
.kc { fill: #54ffff; stroke: none; }
.vn { font: 14px "Noto Sans CJK SC", sans-serif; fill: #aaa; }
.cyan-t { font: 12px "Liberation Sans", sans-serif; fill: #18d8ff; }
.mon { font: 13.500px "Liberation Sans", sans-serif; fill: #ff3232; }
.act { font-family: "Noto Sans CJK SC", sans-serif; fill: #8a8a8a; fill-opacity: 0.55; }
.a1 { font-size: 20px; }
.a2 { font-size: 14px; }

.sidebar { position: absolute; left: 712px; top: 242px; width: 42px; height: 294px; background: rgba(24, 25, 30, 0.88); border-radius: 8px 0 0 8px; display: flex; flex-direction: column; align-items: center; padding-top: 8px; }
.side-i { display: flex; flex-direction: column; align-items: center; height: 42px; gap: 1px; font: 12px/14px "Noto Sans CJK SC", sans-serif; color: #8c8c8c; white-space: nowrap; }
.side-i.top { height: 26px; }
.side-sep { width: 32px; height: 1px; background: #333; margin: 2px 0 5px; flex: none; }

/* windows */
.win { position: absolute; }
.profit { left: 78px; top: 630px; width: 699px; height: 563px; background: #f2f2f2; border: 1px solid #4285d8; border-top: none; display: flex; flex-direction: column; }
.ptitle { height: 33px; flex: none; background: #4285d8; color: #fff; font: 14px "Noto Sans CJK SC", sans-serif; display: flex; align-items: center; justify-content: space-between; padding: 0 9px; margin: 0 -1px; }
.ptitle b { font: bold 15px "Liberation Sans", sans-serif; }
.pbody { flex: 1; padding: 10px 11px 12px 11px; min-height: 0; }
.pcard { background: #fff; border-radius: 6px; height: 100%; position: relative; padding: 24px 0 0 30px; }
.bluesq { position: absolute; left: -4px; top: 33px; width: 12px; height: 8px; background: #0a78d8; }
.ptotal { height: 24px; display: flex; align-items: center; color: #333; position: relative; }
.pl { font: bold 20px "Noto Sans CJK SC", sans-serif; }
.pv { font: bold 21.500px "Liberation Sans", sans-serif; color: #f00; margin-left: 5px; }
.eye { margin-left: 26px; }
.help { position: absolute; left: 591px; top: 1px; }
.q { font: 12px "Liberation Sans", sans-serif; fill: #5ab4f0; text-anchor: middle; }
.pstats { margin-top: 17px; height: 20px; display: flex; font: 14px/20px "Noto Sans CJK SC", "Liberation Sans", sans-serif; color: #444; }
.st em { font: 14px "Liberation Sans", sans-serif; color: #f00; }
.st { white-space: nowrap; }
.s1 { width: 132.500px; }
.s2 { width: 112.500px; }
.s3 { width: 112px; }
.ptabs { margin-top: 9px; width: 608px; height: 24px; border-bottom: 1px solid #000; display: flex; }
.ptab { width: 60px; font: 14px/22px "Noto Sans CJK SC", sans-serif; text-align: center; color: #444; }
.ptab.on { background: #0a78d8; color: #fff; border-radius: 5px 5px 0 0; }
.plegend { margin-top: 8px; display: flex; padding-left: 6px; font: 14px/20px "Noto Sans CJK SC", sans-serif; color: #bbb; gap: 10px; }
.lg { display: flex; align-items: center; gap: 5px; }
.lg i { width: 3px; height: 3px; border-radius: 50%; background: #aaa; }
.lg.on { color: #1a84de; }
.lg.on i { background: #1a84de; }
.pchart { position: absolute; left: 0; bottom: 0; }
.pg { stroke: #c8c8c8; stroke-dasharray: 2 2; }
.ptx { font: 14px "Liberation Sans", sans-serif; fill: #555; }
.pr { fill: none; stroke: #f44; stroke-width: 1.200; }
.pb { fill: none; stroke: #3a97e8; stroke-width: 1.500; }
.pwm2 { font: italic bold 42px "Noto Sans CJK SC", sans-serif; fill: #f3f3f3; }

.trade { left: 807px; top: 605px; width: 1351px; height: 611px; background: #e8f0f7; display: flex; flex-direction: column; border-radius: 4px 4px 0 0; font: 12px "Noto Sans CJK SC", sans-serif; color: #000; }
.ttitle { height: 25px; flex: none; display: flex; align-items: center; gap: 7px; padding-left: 5px; color: #8a8a8a; background: #f3f7fb; border-bottom: 1px solid #d0dce6; letter-spacing: 0.1px; }
.toolbar { height: 51px; flex: none; background: linear-gradient(#eff5fa, #c4d8e8); display: flex; align-items: flex-start; padding-top: 5px; position: relative; }
.tools { display: flex; padding-left: 3px; }
.tool { width: 47px; display: flex; flex-direction: column; align-items: center; gap: 4px; font-size: 12px; line-height: 14px; color: #222; }
.tdrop { margin: 16px 0 0 9px; width: 0; height: 0; border: 5px solid transparent; border-top: 5px solid #000; border-bottom: none; }
.tsep { margin-left: 11px; width: 1px; height: 42px; background: #9aa; }
.selects { margin-left: 8px; display: flex; flex-direction: column; gap: 3px; }
.sel { width: 84px; height: 20px; background: #fff; border: 1px solid #c0ccd8; display: flex; align-items: center; justify-content: space-between; padding: 0 6px 0 3px; }
.sel i { width: 0; height: 0; border: 4px solid transparent; border-top: 4px solid #000; border-bottom: none; }
.selt { font-family: "Liberation Serif", "Noto Sans CJK SC", serif; font-weight: bold; }
.mono { font: 12px "Liberation Mono", monospace; letter-spacing: -1.200px; }
.add { position: absolute; left: 510px; top: 5px; }
.tmain { flex: 1; display: grid; grid-template-columns: 206px 1fr; min-height: 0; background: #dfe9f1; }
.navcol { display: flex; flex-direction: column; min-width: 0; border-right: 2px solid #b8c8d8; }
.treewrap { height: 472px; flex: none; display: flex; background: #e9f1f7; overflow: hidden; padding-top: 2px; }
.tree { flex: 1; overflow: hidden; padding-left: 8px; }
.titem { height: 22px; display: flex; align-items: center; gap: 5px; white-space: nowrap; color: #1a1a1a; }
.titem.sub { padding-left: 24px; gap: 7px; }
.ticon { flex: none; }
.ict { font: bold 12px "Noto Sans CJK SC", sans-serif; fill: #fff; text-anchor: middle; }
.ict2 { font: bold 8px "Liberation Sans", sans-serif; fill: #fff; text-anchor: middle; }
.tl { padding: 0 2px; height: 22px; line-height: 22px; }
.sel2 { background: #2f6ec6; color: #ff0; width: 56px; }
.hot { background: #e81010; color: #fff; border-radius: 7px; font: bold 9px/12px "Liberation Sans", sans-serif; padding: 0 5px; margin-left: 1px; }
.vscroll { width: 11px; flex: none; margin: 1px 2px 0 0; display: flex; flex-direction: column; background: #c8d6e4; }
.sb-a { height: 12px; font: 9px/12px "Liberation Sans", sans-serif; color: #1c3c6c; background: #e4eef6; text-align: center; }
.sb-a.dn { margin-top: auto; }
.sb-t { height: 290px; background: #e4edf5; border-bottom: 1px solid #aabccc; }
.ntabs { height: 21px; flex: none; display: flex; background: #e9f1f7; border-top: 1px solid #b8c8d8; overflow: hidden; position: relative; }
.ntabs.r2 { height: 20px; }
.ntab { height: 100%; border-right: 1px solid #b8c8d8; text-align: center; line-height: 19px; white-space: nowrap; flex: none; }
.ntab.on { color: #e01010; }
.n1 { width: 72px; } .n2 { width: 102px; } .n3 { width: 26px; }
.n4 { width: 62px; } .n5 { width: 72px; }
.jian { margin-left: 20px; width: 30px; height: 17px; border-radius: 9px 0 0 9px; background: #f4f8fc; border: 1px solid #c4d4e4; border-right: none; color: #4a8ad8; display: flex; gap: 2px; justify-content: center; font-size: 11px; line-height: 15px; }
.redplay { position: absolute; right: 1px; top: 1px; width: 8px; height: 17px; border: 1px solid #e01010; background: #fff; }
.redplay::after { content: ''; position: absolute; left: 0; top: 2px; border-left: 6px solid #e01010; border-top: 5px solid transparent; border-bottom: 5px solid transparent; }
.rightcol { background: #e9f1f7; min-width: 0; display: flex; flex-direction: column; }
.rtabs { height: 24px; flex: none; display: flex; align-items: center; border-bottom: 1px solid #b0bcc8; padding-top: 4px; position: relative; }
.rtab { width: 59px; margin-left: 1px; height: 19px; text-align: center; background: #fff; color: #e01010; font-size: 14px; line-height: 19px; clip-path: polygon(0 0, 72% 0, 100% 100%, 0 100%); }
.chart-ic { margin: 0 5px 0 15px; }
.rtabs span { font-size: 12.500px; }
.funds { display: grid; grid-template-columns: 70px 66px 80px 67px 100px 45px; padding: 9px 0 0 9px; font-size: 12px; line-height: 18px; height: 66px; flex: none; }
.funds b { font: 12px/18px "Liberation Mono", monospace; letter-spacing: -1.200px; color: #c00000; display: flex; justify-content: flex-end; white-space: nowrap; }
.funds .l2 { padding-left: 10px; white-space: pre; }
.funds .l3 { padding-left: 48px; white-space: nowrap; }
.inf { display: inline-block; width: 8px; height: 8px; margin-left: 1px; border-radius: 50%; border: 1px solid #777; font: 6px/7px "Liberation Sans", sans-serif; text-align: center; font-style: normal; color: #777; }
.btns { height: 27px; flex: none; display: flex; gap: 10px; padding-left: 10px; }
.btns button { width: 80px; height: 20px; border: 1px solid #aab; background: linear-gradient(#f4f8fb, #cfe0ec); font: 12.500px/16px "Noto Sans CJK SC", sans-serif; color: #222; padding: 0; }
.grid { flex: 1; background: #fff; min-height: 0; overflow: hidden; border-top: 1px solid #999; }
.grow { display: grid; height: 16px; grid-template-columns: 34px 34px 62px 62px 63px 60px 57px 55px 85.500px 64.500px 79px 82px 81px 90px 59px 59px 51px 55px; width: 1132px; color: #0000b4; font: 12px/15px "Liberation Mono", "Noto Sans CJK SC", monospace; }
.ghead { height: 20px; background: #eef2f6; color: #111; font: 12.500px/18px "Noto Sans CJK SC", sans-serif; border-bottom: 2px solid #a8a8a8; }
.gc { border-right: 1px solid #c0c0c0; border-bottom: 1px solid #c0c0c0; white-space: nowrap; overflow: hidden; min-width: 0; text-align: center; }
.grow .rt { text-align: right; padding-right: 5px; letter-spacing: -1.200px; }
.grow .lt { text-align: left; padding-left: 6px; letter-spacing: -1.200px; }
.cnm { text-align: left; padding-left: 6px; font-family: "Noto Sans CJK SC", sans-serif; }
.mkt { text-align: left; padding-left: 6px; font-family: "Liberation Serif", "Noto Sans CJK SC", serif; font-weight: bold; }
.dys { font-family: "Noto Sans CJK SC", sans-serif; padding-right: 6px; }
.redc { color: #c00000; }
.bk { color: #111; }
.sold { background: #d0d0d0; color: #c00000; }
.sortd { display: inline-block; width: 0; height: 0; border: 4px solid transparent; border-top: 7px solid #00b8e0; border-bottom: none; margin-right: 4px; }
.detail { display: block; width: 22px; height: 12px; margin: 1px 0 0 2px; background: #2a76c6; border-radius: 2px; position: relative; }
.detail i { position: absolute; left: 5px; top: 3px; width: 12px; height: 6px; border-top: 1px solid #fff; border-bottom: 1px solid #fff; }
.detail i::after { content: ''; position: absolute; left: 0; right: 0; top: 1.500px; border-top: 1px solid #fff; }
.filler { height: 49px; }
.total { height: 17px; color: #111; }
.cnx { font-family: "Noto Sans CJK SC", sans-serif; }
.status { height: 22px; flex: none; background: linear-gradient(#e4eef7, #c8dcee); display: flex; align-items: center; font-size: 12.500px; color: #222; position: relative; }
.status span { height: 16px; line-height: 15px; white-space: nowrap; }
.s-co { width: 161px; padding-left: 4px; border-right: 1px solid #778; flex: none; }
.s-led { display: flex; gap: 4px; padding-left: 11px; width: 82px; border-right: 1px solid #778; align-items: center; flex: none; }
.s-led i { width: 8px; height: 8px; background: #00c000; }
.s-blank { width: 55px; border-right: 1px solid #778; flex: none; }
.s-lab { width: 56px; padding-left: 4px; border-right: 1px solid #778; flex: none; }
.s-val { width: 76px; text-align: right; color: #c00000; font: 12px/15px "Liberation Mono", monospace; letter-spacing: -1.200px; padding-right: 2px; border-right: 1px solid #778; flex: none; }
.s-un { width: 33px; padding-left: 2px; border-right: 1px solid #778; flex: none; }
.s-link { padding-left: 11px; color: #1c3cb8; }
.grip { position: absolute; right: 3px; bottom: 2px; width: 14px; height: 14px; background: repeating-linear-gradient(135deg, transparent 0 2px, #9aa 2px 3px); clip-path: polygon(100% 0, 100% 100%, 0 100%); }

.detailw { left: 1817px; top: 458px; width: 609px; height: 310px; background: #e9f2f7; border-radius: 4px; display: flex; flex-direction: column; font: 12px "Noto Sans CJK SC", sans-serif; color: #222; overflow: hidden; box-shadow: 0 0 1px #99b; }
.dtitle { height: 24px; flex: none; background: linear-gradient(#bcd6ee, #e8f2fa); border-bottom: 1px solid #a8b8c4; display: flex; align-items: center; justify-content: space-between; padding: 0 8px; color: #7a7a7a; }
.dclose { width: 15px; height: 15px; background: #3565ab; color: #fff; font: bold 12px/15px "Liberation Sans", sans-serif; text-align: center; }
.dinfo { height: 54px; flex: none; display: grid; grid-template-columns: 117px 120px 119px 113px 1fr; grid-auto-rows: 23px; padding: 4px 0 0 9px; align-items: center; white-space: nowrap; }
.d1 em { font-style: normal; margin-right: 6px; }
.d0, .d1 { font-size: 12px; }
.dtable { margin-left: 6px; width: 592.500px; height: 188px; flex: none; background: #fff; display: flex; flex-direction: column; }
.drow { display: grid; height: 16px; flex: none; grid-template-columns: 71px 63.500px 71.500px 72px 72px 72px 72.500px 85.500px 12.500px; color: #0000b4; font: 12px/15px "Liberation Mono", "Noto Sans CJK SC", monospace; letter-spacing: -1.200px; }
.dhead { height: 21px; background: #eef2f6; color: #111; font: 12.500px/20px "Noto Sans CJK SC", sans-serif; letter-spacing: 0; border-top: 1px solid #a8a8a8; border-bottom: 2px solid #a8a8a8; }
.dc { border-right: 1px solid #c0c0c0; border-bottom: 1px solid #c0c0c0; text-align: center; white-space: nowrap; overflow: hidden; }
.dhead .dc { border-bottom: none; }
.dop { font-family: "Noto Sans CJK SC", sans-serif; letter-spacing: 0; }
.dmid { text-align: center; }
.drt { text-align: right; padding-right: 6px; }
.dred { color: #c00000; }
.dfill { flex: 1; }
.dfill .dc { border-bottom: none; }
.dfoot { flex: 1; padding: 4px 0 0 6px; background: linear-gradient(112deg, #8dc7ec 0 62%, #a9d8f4 62% 66%, #90caef 66% 90%, #bfe2f6 90%); }
.dfoot p { margin: 0; height: 19px; line-height: 18px; font-size: 12.500px; color: #222; }
.gap { margin-left: 16px; }
.dnote { color: #8ba7c0; }
</style>
